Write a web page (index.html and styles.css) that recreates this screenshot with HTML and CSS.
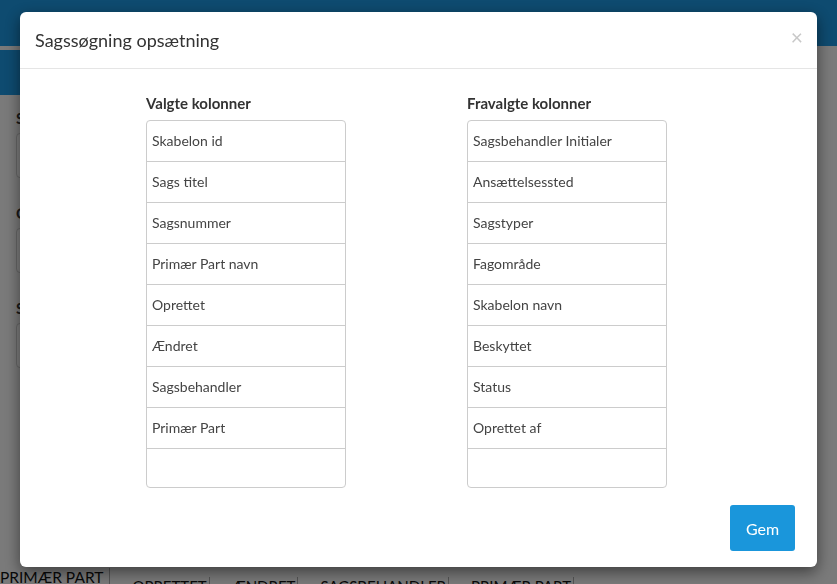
FILE: index.html
```html
<!DOCTYPE html>
<html lang="da">
<head>
<meta charset="utf-8">
<title>Sagssøgning</title>
<link rel="stylesheet" href="styles.css">
</head>
<body>
<div class="page">
  <div class="topbar"></div>
  <div class="subbar"><div class="subbar-block"></div></div>
  <div class="form">
    <div class="field"><div class="field-label">Sagsnummer</div><div class="field-input"></div></div>
    <div class="field"><div class="field-label">Oprettet</div><div class="field-input"></div></div>
    <div class="field"><div class="field-label">Sagsbehandler</div><div class="field-input"></div></div>
  </div>
  <div class="results">
    <div class="results-first">PRIMÆR PART</div>
    <div class="results-head">
      <span class="th">OPRETTET</span>
      <span class="th">ÆNDRET</span>
      <span class="th">SAGSBEHANDLER</span>
      <span class="th">PRIMÆR PART</span>
    </div>
  </div>
</div>

<div class="backdrop"></div>

<div class="modal">
  <div class="modal-header">
    <h4 class="modal-title">Sagssøgning opsætning</h4>
    <span class="modal-close">×</span>
  </div>
  <div class="modal-body">
    <div class="columns">
      <div class="col">
        <div class="col-title">Valgte kolonner</div>
        <ul class="list">
          <li>Skabelon id</li>
          <li>Sags titel</li>
          <li>Sagsnummer</li>
          <li>Primær Part navn</li>
          <li>Oprettet</li>
          <li>Ændret</li>
          <li>Sagsbehandler</li>
          <li>Primær Part</li>
          <li class="empty"></li>
        </ul>
      </div>
      <div class="col">
        <div class="col-title">Fravalgte kolonner</div>
        <ul class="list">
          <li>Sagsbehandler Initialer</li>
          <li>Ansættelsessted</li>
          <li>Sagstyper</li>
          <li>Fagområde</li>
          <li>Skabelon navn</li>
          <li>Beskyttet</li>
          <li>Status</li>
          <li>Oprettet af</li>
          <li class="empty"></li>
        </ul>
      </div>
    </div>
    <div class="actions">
      <button class="btn-save">Gem</button>
    </div>
  </div>
</div>
</body>
</html>
```

FILE: styles.css
```css
* { box-sizing: border-box; }
html, body { margin: 0; padding: 0; }
body {
  font-family: Lato, "Open Sans", "Liberation Sans", sans-serif;
  background: #f4f4f4;
  color: #222;
  width: 837px;
  height: 584px;
  overflow: hidden;
}

.page { display: flex; flex-direction: column; }
.topbar { height: 46px; background: #1c96e0; }
.subbar { height: 45px; margin-top: 4px; display: flex; }
.subbar-block { width: 400px; background: #1c96e0; }

.form { padding: 13px 0 0 16px; width: 420px; display: flex; flex-direction: column; }
.field { display: flex; flex-direction: column; margin-bottom: 25px; }
.field-label { font-size: 15px; line-height: 20px; font-weight: 700; color: #333; margin-bottom: 5px; }
.field-input { height: 45px; border: 1px solid #ccc; border-radius: 4px; background: #fff; }

.results { margin-top: 175px; display: flex; align-items: flex-start; }
.results-first { font-size: 15.5px; line-height: 18px; padding-right: 6px; border-right: 1px solid #aaa; height: 22px; color: #111; }
.results-head { display: flex; margin-left: 0; margin-top: 9px; }
.th { font-size: 15px; line-height: 18px; padding: 0 2px 0 22px; border-right: 1px solid #aaa; color: #111; }

.backdrop { position: fixed; inset: 0; background: rgba(0, 0, 0, 0.5); }

.modal {
  position: fixed;
  left: 20px;
  top: 12px;
  width: 797px;
  height: 555px;
  background: #fff;
  border-radius: 6px;
  box-shadow: 0 5px 15px rgba(0, 0, 0, 0.5);
  display: flex;
  flex-direction: column;
}
.modal-header {
  display: flex;
  justify-content: space-between;
  align-items: center;
  padding: 15px 14px 15px 15px;
  border-bottom: 1px solid #e5e5e5;
  height: 57px;
}
.modal-title { margin: 0; font-size: 18px; font-weight: 400; line-height: 26px; color: #333; }
.modal-close { font-size: 21px; line-height: 20px; color: #c8c8c8; font-weight: 400; margin-top: -6px; }

.modal-body { flex: 1; display: flex; flex-direction: column; padding: 24px 22px 16px 126px; }
.columns { display: flex; gap: 121px; }
.col { width: 200px; display: flex; flex-direction: column; }
.col-title { font-size: 15px; font-weight: 700; line-height: 20px; color: #333; margin-bottom: 7px; }
.list {
  list-style: none;
  margin: 0;
  padding: 0;
  border: 1px solid #ccc;
  border-radius: 4px;
}
.list li {
  height: 41px;
  line-height: 40px;
  padding: 0 5px;
  font-size: 14px;
  color: #444;
  border-bottom: 1px solid #ccc;
}
.list li.empty { height: 38px; border-bottom: none; }

.actions { margin-top: auto; display: flex; justify-content: flex-end; }
.btn-save {
  width: 65px;
  height: 46px;
  border: none;
  border-radius: 3px;
  background: #1a96db;
  color: #fff;
  font-family: Lato, "Open Sans", sans-serif;
  font-size: 16px;
  padding: 0;
}
```
